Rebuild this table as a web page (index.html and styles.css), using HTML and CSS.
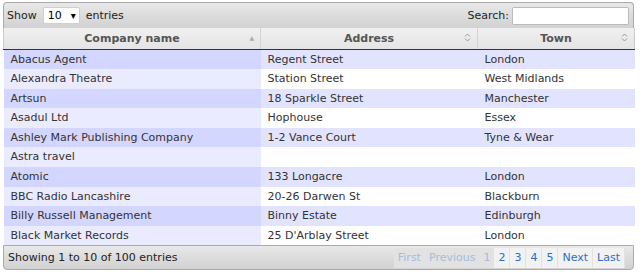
FILE: index.html
```html
<!DOCTYPE html>
<html>
<head>
<meta charset="utf-8">
<link rel="stylesheet" href="styles.css">
</head>
<body>
<div class="wrap">
  <div class="toolbar top">
    <label class="length">Show <span class="select">10<span class="caret">▾</span></span> entries</label>
    <label class="search">Search: <span class="input"></span></label>
  </div>
  <table class="grid">
    <colgroup><col class="c1"><col class="c2"><col class="c3"></colgroup>
    <thead>
      <tr>
        <th>Company name<span class="sort up">▲</span></th>
        <th>Address<span class="sort both"><svg width="7" height="9" viewBox="0 0 7 9"><path d="M1 3.5 L3.5 1 L6 3.5" fill="none" stroke="#999" stroke-width="1"/><path d="M1 5.5 L3.5 8 L6 5.5" fill="none" stroke="#999" stroke-width="1"/></svg></span></th>
        <th>Town<span class="sort both"><svg width="7" height="9" viewBox="0 0 7 9"><path d="M1 3.5 L3.5 1 L6 3.5" fill="none" stroke="#999" stroke-width="1"/><path d="M1 5.5 L3.5 8 L6 5.5" fill="none" stroke="#999" stroke-width="1"/></svg></span></th>
      </tr>
    </thead>
    <tbody>
      <tr class="odd"><td>Abacus Agent</td><td>Regent Street</td><td>London</td></tr>
      <tr class="even"><td>Alexandra Theatre</td><td>Station Street</td><td>West Midlands</td></tr>
      <tr class="odd"><td>Artsun</td><td>18 Sparkle Street</td><td>Manchester</td></tr>
      <tr class="even"><td>Asadul Ltd</td><td>Hophouse</td><td>Essex</td></tr>
      <tr class="odd"><td>Ashley Mark Publishing Company</td><td>1-2 Vance Court</td><td>Tyne &amp; Wear</td></tr>
      <tr class="even"><td>Astra travel</td><td></td><td></td></tr>
      <tr class="odd"><td>Atomic</td><td>133 Longacre</td><td>London</td></tr>
      <tr class="even"><td>BBC Radio Lancashire</td><td>20-26 Darwen St</td><td>Blackburn</td></tr>
      <tr class="odd"><td>Billy Russell Management</td><td>Binny Estate</td><td>Edinburgh</td></tr>
      <tr class="even"><td>Black Market Records</td><td>25 D'Arblay Street</td><td>London</td></tr>
    </tbody>
  </table>
  <div class="toolbar bottom">
    <div class="info">Showing 1 to 10 of 100 entries</div>
    <div class="pager">
      <span class="btn off">First</span><span class="btn off">Previous</span><span class="btn off num">1</span><span class="btn num">2</span><span class="btn num">3</span><span class="btn num">4</span><span class="btn num">5</span><span class="btn">Next</span><span class="btn">Last</span>
    </div>
  </div>
</div>
</body>
</html>
```

FILE: styles.css
```css
html, body {
  margin: 0;
  padding: 0;
  background: #ffffff;
}
body {
  font-family: "DejaVu Sans", Verdana, sans-serif;
  font-size: 11px;
  color: #333333;
}
.wrap {
  margin: 2px 0 0 3px;
  width: 631px;
}
.toolbar {
  display: flex;
  align-items: center;
  justify-content: space-between;
  box-sizing: border-box;
  border: 1px solid #aaaaaa;
  background: linear-gradient(#e9e9e9, #dcdcdc 50%, #d2d2d2);
  color: #222222;
}
.toolbar.top {
  height: 26px;
  padding: 0 4px 0 3px;
  border-radius: 4px 4px 0 0;
  border-bottom: none;
}
.toolbar.bottom {
  height: 25px;
  padding: 0 8px 0 3px;
  border-radius: 0 0 4px 4px;
}
.length, .search {
  display: flex;
  align-items: center;
}
.select {
  display: inline-flex;
  align-items: center;
  justify-content: space-between;
  box-sizing: border-box;
  width: 37px;
  height: 17px;
  margin: 0 6px 0 6px;
  padding: 0 3px 0 4px;
  background: #ffffff;
  border: 1px solid #cfcfcf;
  border-radius: 2px;
  color: #000;
}
.caret {
  font-size: 10px;
}
.input {
  display: inline-block;
  box-sizing: border-box;
  width: 117px;
  height: 18px;
  margin-left: 3px;
  background: #ffffff;
  border: 1px solid #bbbbbb;
  border-radius: 2px;
}
.grid {
  width: 100%;
  border-collapse: collapse;
  table-layout: fixed;
}
.c1 { width: 257px; }
.c2 { width: 217px; }
.c3 { width: 157px; }
th {
  position: relative;
  height: 21px;
  box-sizing: border-box;
  padding: 0 10px;
  background: linear-gradient(#f0f0f0, #e4e4e4);
  border: 1px solid #d3d3d3;
  border-top: none;
  border-bottom: 1px solid #333333;
  color: #555555;
  font-weight: bold;
  text-align: center;
}
th:first-child { border-left: 1px solid #cccccc; }
th:last-child { border-right: 1px solid #cccccc; }
.sort {
  position: absolute;
  right: 6px;
  top: 5px;
  color: #aaaaaa;
  font-size: 6px;
  line-height: 9px;
}
.sort svg { display: block; }
td {
  padding: 3px 7px;
  line-height: 13.6px;
  white-space: nowrap;
}
tr.odd td { background: #e2e4ff; }
tr.odd td:first-child { background: #d3d6ff; }
tr.even td { background: #ffffff; }
tr.even td:first-child { background: #eaebff; }
.info {
  padding-left: 1px;
}
.pager {
  display: flex;
  align-items: center;
}
.btn {
  box-sizing: border-box;
  height: 20px;
  line-height: 19px;
  padding: 0 4px;
  color: #2e6ec8;
  background: #f2f2f2;
  border-right: 1px solid #e2e2e2;
}
.btn.num { padding: 0 4px; }
.btn.off {
  color: #a9bbd9;
  background: #e2e2e2;
  border-right: none;
}
```
